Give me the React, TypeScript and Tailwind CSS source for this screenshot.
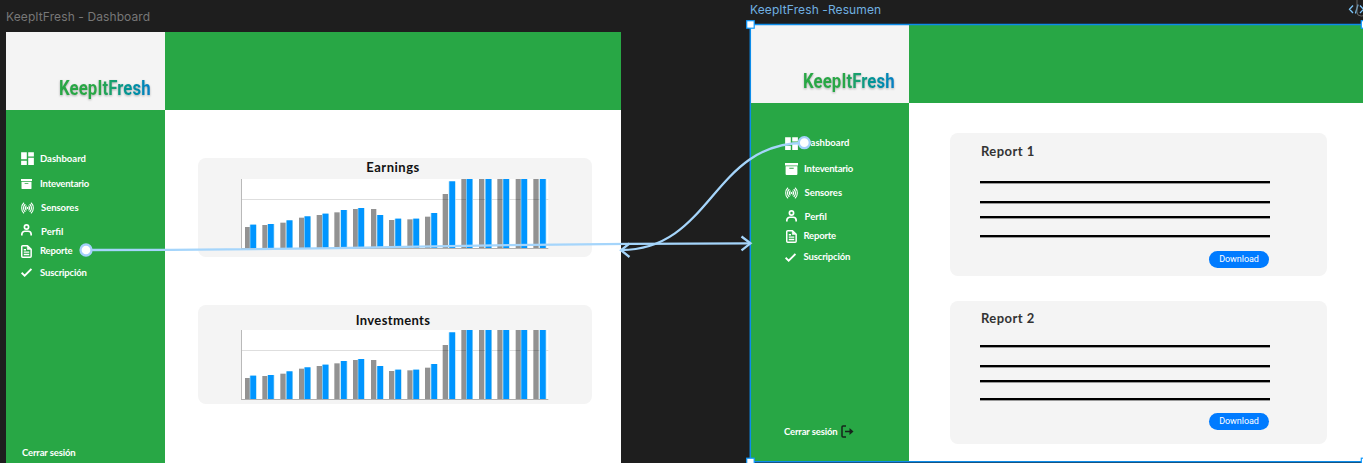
import React from 'react';
import { MdDashboard } from 'react-icons/md';

const grayX = [165, 217, 271, 327, 380, 433, 489, 543, 597, 652, 705, 758, 814, 867, 922, 977, 1030];
const blueX = [180, 233, 289, 343, 397, 452, 504, 561, 615, 669, 723, 777, 829, 886, 939, 993, 1049];
const grayY = [234, 228, 221, 206, 198, 190, 180, 180, 213, 211, 203, 135, 90, 90, 90, 90, 90];
const blueY = [227, 225, 214, 202, 194, 183, 177, 198, 209, 209, 192, 97, 90, 90, 90, 90, 90];

function BarChart() {
  return (
    <svg className="block h-[70px] w-[308px]" viewBox="153 90 924 210">
      <rect x="154" y="90" width="921" height="208" fill="#fff" />
      {grayX.map((x, i) => (
        <rect key={x} x={x} y={grayY[i]} width="16" height={298 - grayY[i]} fill="#929292" />
      ))}
      <rect x="154" y="150" width="921" height="3" fill="#000" fillOpacity="0.13" />
      {blueX.map((x, i) => (
        <React.Fragment key={x}>
          <rect x={x - 1} y={blueY[i]} width="21" height={298 - blueY[i]} fill="#a9dcf2" />
          <rect x={x + 1} y={blueY[i]} width="17" height={298 - blueY[i]} fill="#0095ff" />
        </React.Fragment>
      ))}
      <rect x="153" y="90" width="3" height="209" fill="#b9b9b9" />
      <rect x="153" y="297" width="922" height="3" fill="#b0b0b0" />
    </svg>
  );
}

function ChartCard({ title, first }: { title: string; first?: boolean }) {
  return (
    <section className="flex h-[99.500px] w-[394px] flex-col rounded-[8px] bg-[#f4f4f4]">
      <h2
        className={`w-[391px] text-center text-[13px] leading-[16px] font-bold text-[#111] ${
          first ? 'mt-[1px] h-[20px] tracking-[0.5px]' : 'mt-[7px] h-[18px] tracking-[0.35px]'
        }`}
      >
        {title}
      </h2>
      <div className="pl-[43.5px]">
        <BarChart />
      </div>
    </section>
  );
}

function ArchiveIcon({ wide }: { wide?: boolean }) {
  return (
    <svg className={wide ? 'h-[12px] w-[13px]' : 'h-[10px] w-[11px]'} viewBox="0 0 13 12" preserveAspectRatio="none" fill="currentColor">
      <path d="M0 0h13v2.4H0zM.6 3.3h11.8V11a1 1 0 0 1-1 1H1.6a1 1 0 0 1-1-1zM4.3 4.7v1.1h4.4V4.7z" fillRule="evenodd" />
    </svg>
  );
}

function SensorIcon() {
  return (
    <svg className="h-[12px] w-[13px]" viewBox="0 0 26 24" fill="none" stroke="currentColor" strokeWidth="2.200" strokeLinecap="round">
      <circle cx="13" cy="12" r="2.200" fill="currentColor" stroke="none" />
      <path d="M5.500 2C0 7 0 17 5.500 22M20.500 2C26 7 26 17 20.500 22M8 5C4 9 4 15 8 19M18 5c4 4 4 10 0 14M10.300 8c-2 2.500-2 5.500 0 8M15.700 8c2 2.500 2 5.500 0 8" />
    </svg>
  );
}

function UserIcon() {
  return (
    <svg className="h-[12px] w-[11px]" viewBox="0 0 22 24" fill="none" stroke="currentColor" strokeWidth="3.400">
      <circle cx="11" cy="6" r="4.200" />
      <path d="M1.700 23v-2.500a6 6 0 0 1 6-6h6.600a6 6 0 0 1 6 6V23" />
    </svg>
  );
}

function CheckIcon() {
  return (
    <svg className="h-[9px] w-[11px]" viewBox="0 0 22 18" fill="none" stroke="currentColor" strokeWidth="3.600">
      <path d="M1.200 9.500L7.300 15.300L20.800 2" />
    </svg>
  );
}

function ReportIcon() {
  return (
    <svg className="h-[13px] w-[11px]" viewBox="0 0 22 26" fill="none" stroke="currentColor" strokeWidth="3" strokeLinejoin="round">
      <path d="M3.500 1.500H13L20.300 8.500V22.500a2 2 0 0 1-2 2H3.500a2 2 0 0 1-2-2v-19a2 2 0 0 1 2-2z" />
      <path d="M12.500 2v7h7z" fill="currentColor" strokeWidth="1" />
      <path d="M5.500 9.500h4.500M5.500 14.300h11M5.500 19h11" strokeWidth="2.700" />
    </svg>
  );
}

function LogoutIcon() {
  return (
    <svg className="h-[13px] w-[13px] text-[#16241b]" viewBox="0 0 26 26" fill="none" stroke="currentColor" strokeWidth="3" strokeLinejoin="round">
      <path d="M10 2H4a2 2 0 0 0-2 2v18a2 2 0 0 0 2 2h6M8 13h14" />
      <path d="M17 6v14L25 13z" fill="currentColor" strokeWidth="0" />
    </svg>
  );
}

function Row({ icon, label, className }: { icon: React.ReactNode; label: string; className: string }) {
  return (
    <li className={`flex h-[18px] shrink-0 items-center ${className}`}>
      <span className="flex w-[13px] items-center justify-start">{icon}</span>
      <span className="whitespace-nowrap">{label}</span>
    </li>
  );
}

function Logo() {
  return (
    <div className="flex h-[78px] w-full items-end bg-[#f4f4f4] pb-[10px] pl-[53px]">
      <span className="block origin-left scale-x-[0.84] bg-linear-to-r from-[#28a745] from-45% to-[#087fc6] bg-clip-text text-[20px] leading-[24px] font-bold tracking-[0.1px] whitespace-nowrap text-transparent [font-family:Roboto,sans-serif] drop-shadow-[0_1.5px_1px_rgba(0,0,0,0.3)]">
        KeepItFresh
      </span>
    </div>
  );
}

function Dashboard() {
  return (
    <div className="absolute top-[32px] left-[6px] flex h-[431px] w-[615px] bg-white">
      <aside className="flex w-[159px] shrink-0 flex-col bg-[#28a745] text-white">
        <Logo />
        <ul className="flex flex-col pl-[15px] text-[9.500px] leading-[12px] font-bold">
          <Row className="mt-[39.500px] gap-[6px]" icon={<MdDashboard className="-ml-[2px] size-[17px] shrink-0" />} label="Dashboard" />
          <Row className="mt-[7px] gap-[6px] tracking-[-0.2px]" icon={<ArchiveIcon />} label="Inteventario" />
          <Row className="mt-[6.500px] gap-[7px] tracking-[-0.05px]" icon={<SensorIcon />} label="Sensores" />
          <Row className="mt-[5.500px] gap-[7px]" icon={<span className="-mt-[3px]"><UserIcon /></span>} label="Perfil" />
          <Row className="mt-[1.500px] gap-[6px] tracking-[-0.2px]" icon={<ReportIcon />} label="Reporte" />
          <Row className="mt-[3.500px] gap-[6px] tracking-[-0.15px]" icon={<CheckIcon />} label="Suscripción" />
        </ul>
        <div className="mt-auto pb-[4px] pl-[16px] text-[9.500px] leading-[12px] font-bold tracking-[-0.15px]">Cerrar sesión</div>
      </aside>
      <main className="flex grow flex-col">
        <header className="h-[78px] bg-[#28a745]" />
        <div className="flex flex-col gap-[47.500px] pt-[47.500px] pl-[32.500px]">
          <ChartCard title="Earnings" first />
          <ChartCard title="Investments" />
        </div>
      </main>
    </div>
  );
}

function ReportCard({ title, second }: { title: string; second?: boolean }) {
  return (
    <section className="flex h-[143px] w-[377px] flex-col rounded-[8px] bg-[#f4f4f4] pl-[30px]">
      <h2 className={`ml-[1px] text-[13px] leading-[16px] font-bold tracking-[0.45px] text-[#333] ${second ? 'mt-[9px]' : 'mt-[10px]'}`}>{title}</h2>
      <div className={`flex w-[290px] flex-col ${second ? 'mt-[19px]' : 'mt-[22px]'}`}>
        <div className="h-[2px] bg-black shadow-[0_1px_0_#999]" />
        <div className="mt-[18px] h-[2px] bg-black shadow-[0_1px_0_#999]" />
        <div className="mt-[13px] h-[2px] bg-black shadow-[0_1px_0_#999]" />
        <div className={`h-[2px] bg-black shadow-[0_1px_0_#999] ${second ? 'mt-[16px]' : 'mt-[17px]'}`} />
        <button
          className={`mr-[1px] h-[17px] w-[60px] self-end rounded-full bg-[#007bff] text-[9px] leading-[17px] tracking-[-0.04px] text-white [font-family:Roboto,sans-serif] ${
            second ? 'mt-[13px]' : 'mt-[14px]'
          }`}
        >
          Download
        </button>
      </div>
    </section>
  );
}

function Summary() {
  return (
    <div className="absolute top-[25px] left-[750px] flex h-[437px] w-[613px] bg-white">
      <aside className="flex w-[159px] shrink-0 flex-col bg-[#28a745] text-white">
        <Logo />
        <ul className="flex flex-col pl-[35px] text-[9.500px] leading-[12px] font-bold">
          <Row className="mt-[31px] gap-[5.500px]" icon={<MdDashboard className="-ml-[2px] size-[17px] shrink-0" />} label="Dashboard" />
          <Row className="mt-[8px] gap-[6px] tracking-[-0.2px]" icon={<ArchiveIcon wide />} label="Inteventario" />
          <Row className="mt-[6px] gap-[6.500px] tracking-[-0.05px]" icon={<SensorIcon />} label="Sensores" />
          <Row className="mt-[6px] gap-[6.500px]" icon={<span className="-mt-[3px] pl-[1px]"><UserIcon /></span>} label="Perfil" />
          <Row className="mt-[1px] gap-[5.500px] tracking-[-0.2px]" icon={<span className="pl-[1px]"><ReportIcon /></span>} label="Reporte" />
          <Row className="mt-[3px] gap-[5.500px] tracking-[-0.15px]" icon={<CheckIcon />} label="Suscripción" />
        </ul>
        <div className="mt-auto flex items-center gap-[4px] pb-[24px] pl-[34px] text-[9.500px] leading-[12px] font-bold tracking-[-0.15px]">
          <span className="whitespace-nowrap">Cerrar sesión</span>
          <LogoutIcon />
        </div>
      </aside>
      <main className="flex grow flex-col">
        <header className="h-[78px] bg-[#28a745]" />
        <div className="flex flex-col gap-[25px] pt-[30px] pl-[41px]">
          <ReportCard title="Report 1" />
          <ReportCard title="Report 2" second />
        </div>
      </main>
    </div>
  );
}

function CanvasOverlay() {
  return (
    <svg className="absolute inset-0 h-[463px] w-[1363px]" viewBox="0 0 1363 463" fill="none">
      <path d="M1363 24.500H750.300V461.700H1363" stroke="#0d8ce9" strokeWidth="1.500" />
      <g fill="#fff" stroke="#0d99ff" strokeWidth="1.200">
        <rect x="746.700" y="20.700" width="7.500" height="7.500" />
        <rect x="746.700" y="458.200" width="7.500" height="7.500" />
        <rect x="1361.300" y="20.700" width="7.500" height="7.500" />
        <rect x="1361.300" y="458.200" width="7.500" height="7.500" />
      </g>
      <g stroke="#a5d5fb" strokeWidth="2.300">
        <path d="M86 250C418 250 418 243.300 750 243.300" />
        <path d="M741.500 236.500L750.500 243.300L741.500 250.300" />
        <path d="M804 143C712 143 712 250 621 250" />
        <path d="M629.500 243.500L621 250.200L629.500 257" />
      </g>
      <g fill="#fff" stroke="#a5d0fb" strokeWidth="2.300">
        <circle cx="86" cy="250" r="5.500" />
        <circle cx="804.300" cy="142.700" r="5.500" />
      </g>
      <g stroke="#7cc4f8" strokeWidth="1.300">
        <path d="M1353 5.500L1349.500 9.300L1353 13M1358 4.500L1355.500 13.500M1360 5.500L1363.500 9.300L1360 13" />
      </g>
      <rect x="1357" y="-8" width="9" height="24" rx="4" stroke="#666" strokeWidth="1" />
    </svg>
  );
}

export default function App() {
  return (
    <div className="relative h-[463px] w-[1363px] overflow-hidden bg-[#1e1e1e] [font-family:Lato,'Open_Sans',sans-serif]">
      <div className="absolute top-[9px] left-[6px] text-[12px] leading-[16px] tracking-[0.1px] whitespace-nowrap text-[#777] [font-family:Inter,sans-serif]">
        KeepItFresh - Dashboard
      </div>
      <div className="absolute top-[2px] left-[750px] text-[12px] leading-[16px] tracking-[0.1px] whitespace-nowrap text-[#70b0e0] [font-family:Inter,sans-serif]">
        KeepItFresh -Resumen
      </div>
      <Dashboard />
      <Summary />
      <CanvasOverlay />
    </div>
  );
}
